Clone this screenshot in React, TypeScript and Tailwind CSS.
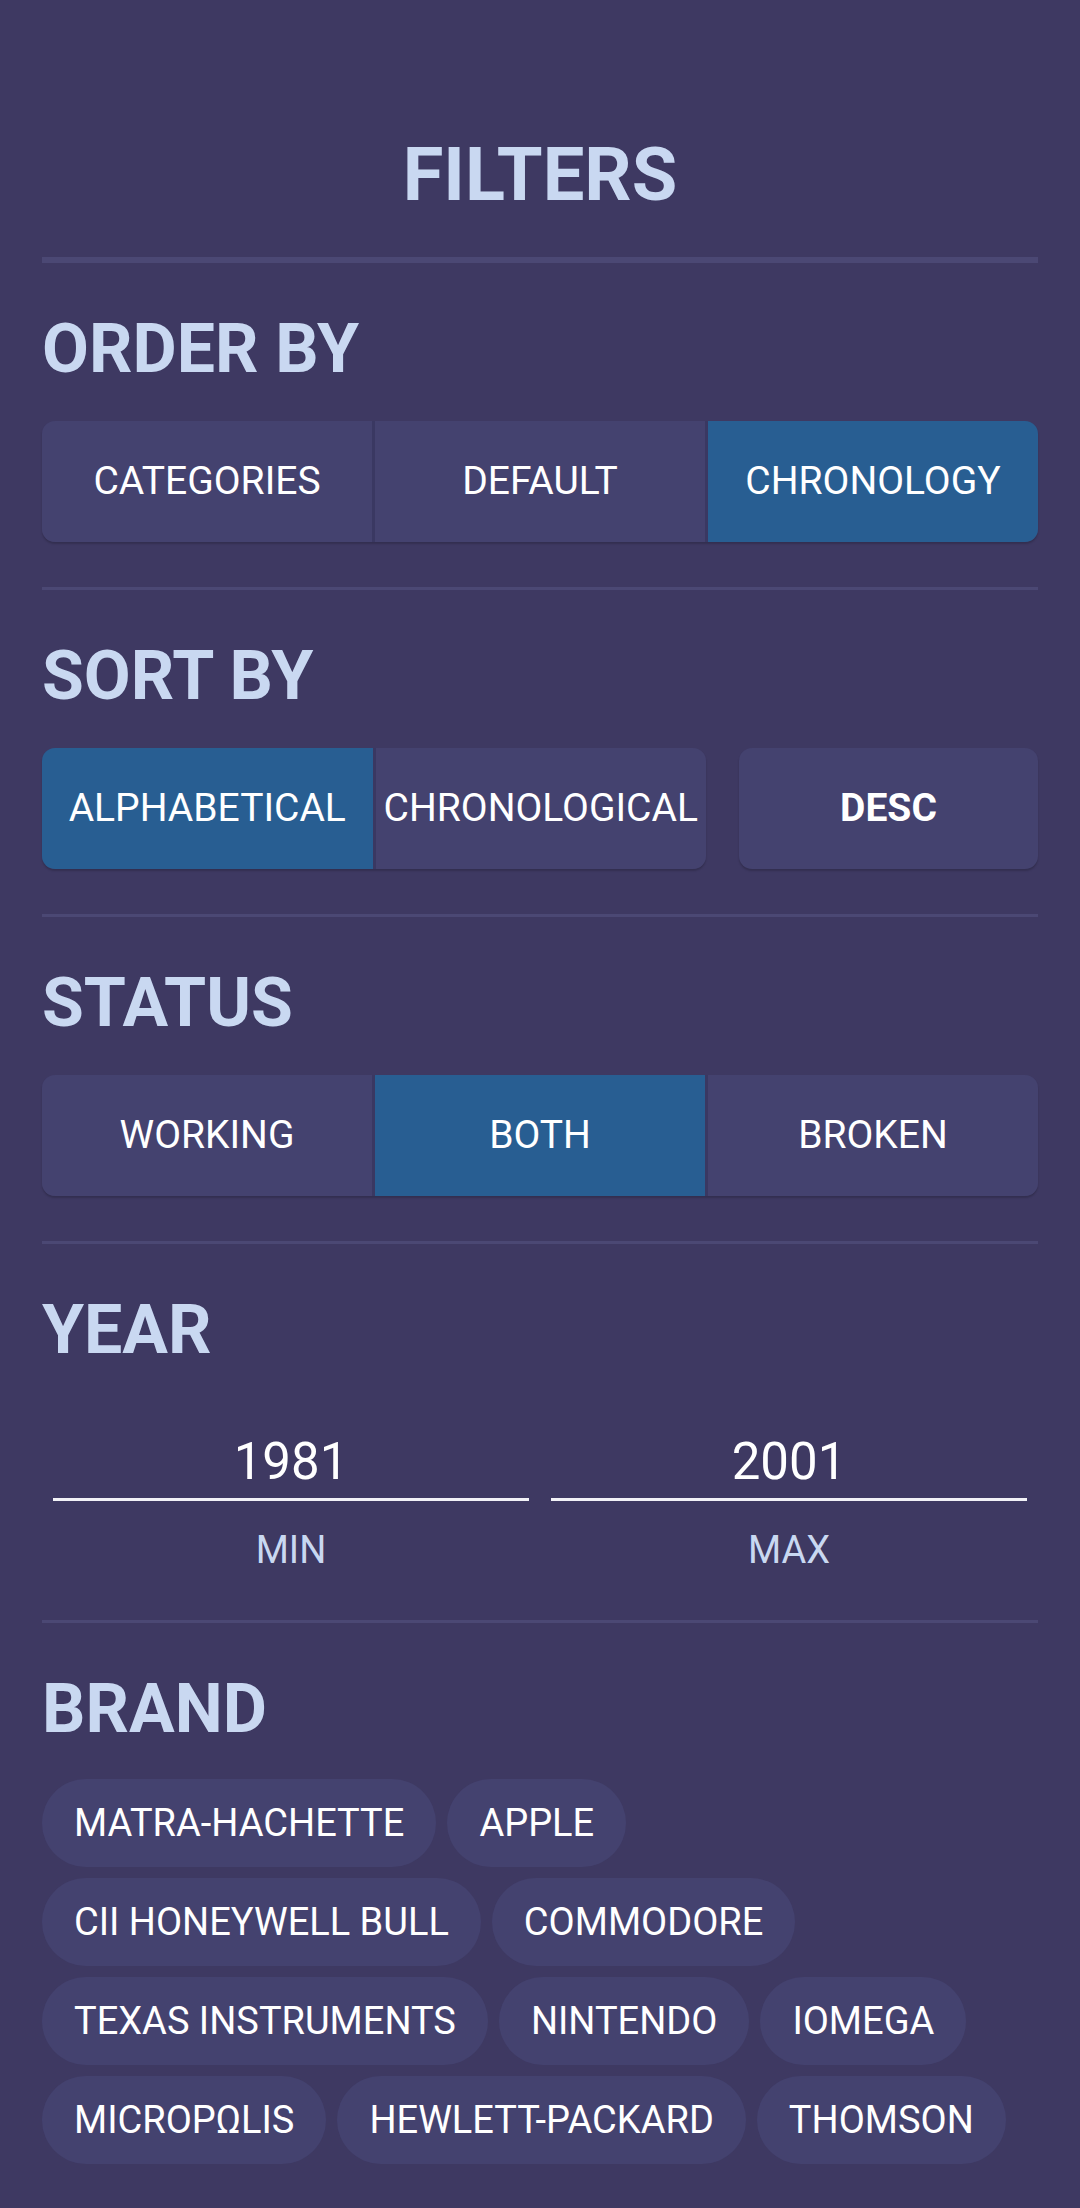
const orderOptions = ["CATEGORIES", "DEFAULT", "CHRONOLOGY"];
const statusOptions = ["WORKING", "BOTH", "BROKEN"];
const brands = [
  "MATRA-HACHETTE",
  "APPLE",
  "CII HONEYWELL BULL",
  "COMMODORE",
  "TEXAS INSTRUMENTS",
  "NINTENDO",
  "IOMEGA",
  "MICROPΩLIS",
  "HEWLETT-PACKARD",
  "THOMSON",
];

function Segmented({ options, active }: { options: string[]; active: string }) {
  return (
    <div className="flex h-[121px] w-full overflow-hidden rounded-[13px] shadow-[0_2px_2px_rgba(0,0,0,0.18)] divide-x-[3px] divide-[#3a3862]">
      {options.map((o) => (
        <button
          key={o}
          className={
            "flex-1 flex items-center justify-center whitespace-nowrap text-[39px] text-white " +
            (o === active ? "bg-[#285e92]" : "bg-[#44426f]")
          }
        >
          {o}
        </button>
      ))}
    </div>
  );
}

function Section({ title, children }: { title: string; children: React.ReactNode }) {
  return (
    <section>
      <h2 className="mt-[52px] text-[68px] font-bold leading-none text-[#c9d8f1]">{title}</h2>
      {children}
    </section>
  );
}

export default function App() {
  return (
    <div className="min-h-screen bg-[#3e3962] px-[42px] pt-[138px] pb-[43px] font-['Roboto',sans-serif]">
      <h1 className="text-center text-[74px] font-bold leading-none text-[#c9d8f1]">FILTERS</h1>
      <div className="mt-[45px] h-[6px] bg-[#4b4874]" />

      {/* Order by */}
      <Section title="ORDER BY">
        <div className="mt-[38px]">
          <Segmented options={orderOptions} active="CHRONOLOGY" />
        </div>
      </Section>
      <div className="mt-[45px] h-[3px] bg-[#4b4874]" />

      {/* Sort by */}
      <Section title="SORT BY">
        <div className="mt-[38px] flex">
          <div className="w-[664px]">
            <Segmented options={["ALPHABETICAL", "CHRONOLOGICAL"]} active="ALPHABETICAL" />
          </div>
          <button className="ml-[33px] flex h-[121px] flex-1 items-center justify-center rounded-[13px] bg-[#44426f] text-[39px] font-bold text-white shadow-[0_2px_2px_rgba(0,0,0,0.18)]">
            DESC
          </button>
        </div>
      </Section>
      <div className="mt-[45px] h-[3px] bg-[#4b4874]" />

      {/* Status */}
      <Section title="STATUS">
        <div className="mt-[38px]">
          <Segmented options={statusOptions} active="BOTH" />
        </div>
      </Section>
      <div className="mt-[45px] h-[3px] bg-[#4b4874]" />

      {/* Year */}
      <Section title="YEAR">
        <div className="mt-[72px] grid grid-cols-2">
          {[
            ["1981", "MIN"],
            ["2001", "MAX"],
          ].map(([v, l]) => (
            <div key={l} className="px-[11px] text-center">
              <div className="border-b-[3px] border-[#f2f2f7] pb-[11px] text-[51px] leading-none text-white">
                {v}
              </div>
              <div className="mt-[30px] text-[38px] leading-none text-[#c9d8f1]">{l}</div>
            </div>
          ))}
        </div>
      </Section>
      <div className="mt-[51px] h-[3px] bg-[#4b4874]" />

      {/* Brand */}
      <Section title="BRAND">
        <div className="mt-[36px] flex flex-wrap gap-[11px]">
          {brands.map((b) => (
            <span
              key={b}
              className="flex h-[88px] items-center whitespace-nowrap rounded-full bg-[#44426f] px-[32px] text-[38px] text-white"
            >
              {b}
            </span>
          ))}
        </div>
      </Section>
    </div>
  );
}
